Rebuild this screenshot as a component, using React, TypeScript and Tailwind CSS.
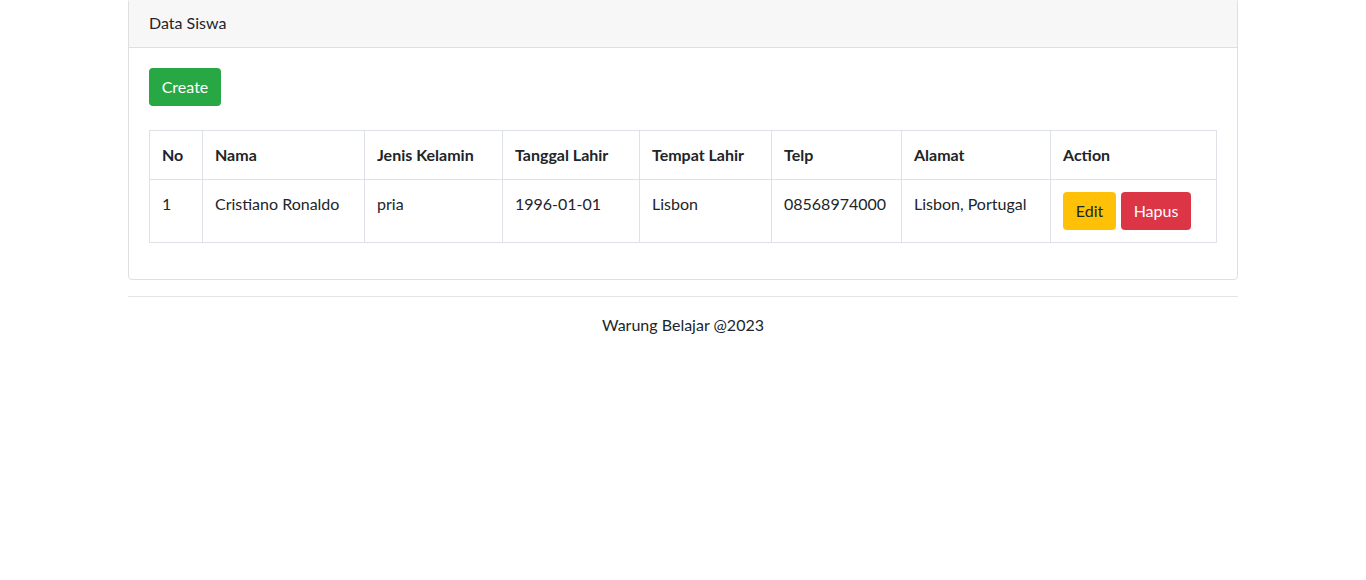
import React from "react";

const cols = [
  { h: "No", w: "w-[53px]" },
  { h: "Nama", w: "w-[162px]" },
  { h: "Jenis Kelamin", w: "w-[138px]" },
  { h: "Tanggal Lahir", w: "w-[137px]" },
  { h: "Tempat Lahir", w: "w-[132px]" },
  { h: "Telp", w: "w-[130px]" },
  { h: "Alamat", w: "w-[149px]" },
  { h: "Action", w: "w-[166px]" },
];

const row = ["1", "Cristiano Ronaldo", "pria", "1996-01-01", "Lisbon", "08568974000", "Lisbon, Portugal"];

export default function App() {
  return (
    <div
      className="min-h-[580px] bg-white text-[#212529] text-[16px] leading-[24px]"
      style={{ fontFamily: "Lato, 'Noto Sans', sans-serif" }}
    >
      <div className="mx-auto w-[1140px] px-[15px]">
        <div className="-mt-[2px] rounded-[4px] border border-[#dfdfdf]">
          <div className="border-b border-[#dfdfdf] bg-[#f7f7f7] px-[20px] py-[12px]">Data Siswa</div>
          <div className="p-[20px]">
            <button className="h-[38px] w-[72px] rounded-[4px] bg-[#28a745] text-center text-white">Create</button>
            <table className="mt-[24px] mb-[16px] w-full table-fixed border-collapse border border-[#dee2e6]">
              <thead>
                <tr>
                  {cols.map((c) => (
                    <th key={c.h} className={`${c.w} border border-[#dee2e6] p-[12px] text-left align-bottom font-bold`}>
                      {c.h}
                    </th>
                  ))}
                </tr>
              </thead>
              <tbody>
                <tr>
                  {row.map((v, i) => (
                    <td key={i} className="border border-[#dee2e6] p-[12px] align-top">
                      {v}
                    </td>
                  ))}
                  <td className="border border-[#dee2e6] p-[12px] align-top">
                    <div className="flex gap-[5px]">
                      <button className="h-[38px] w-[53px] rounded-[4px] bg-[#ffc107] text-center text-[#212529]">Edit</button>
                      <button className="h-[38px] w-[70px] rounded-[4px] bg-[#dc3545] text-center text-white">Hapus</button>
                    </div>
                  </td>
                </tr>
              </tbody>
            </table>
          </div>
        </div>
        <hr className="mt-[16px] mb-[16px] border-t border-[#e5e5e5]" />
        <div className="text-center">Warung Belajar @2023</div>
      </div>
    </div>
  );
}
